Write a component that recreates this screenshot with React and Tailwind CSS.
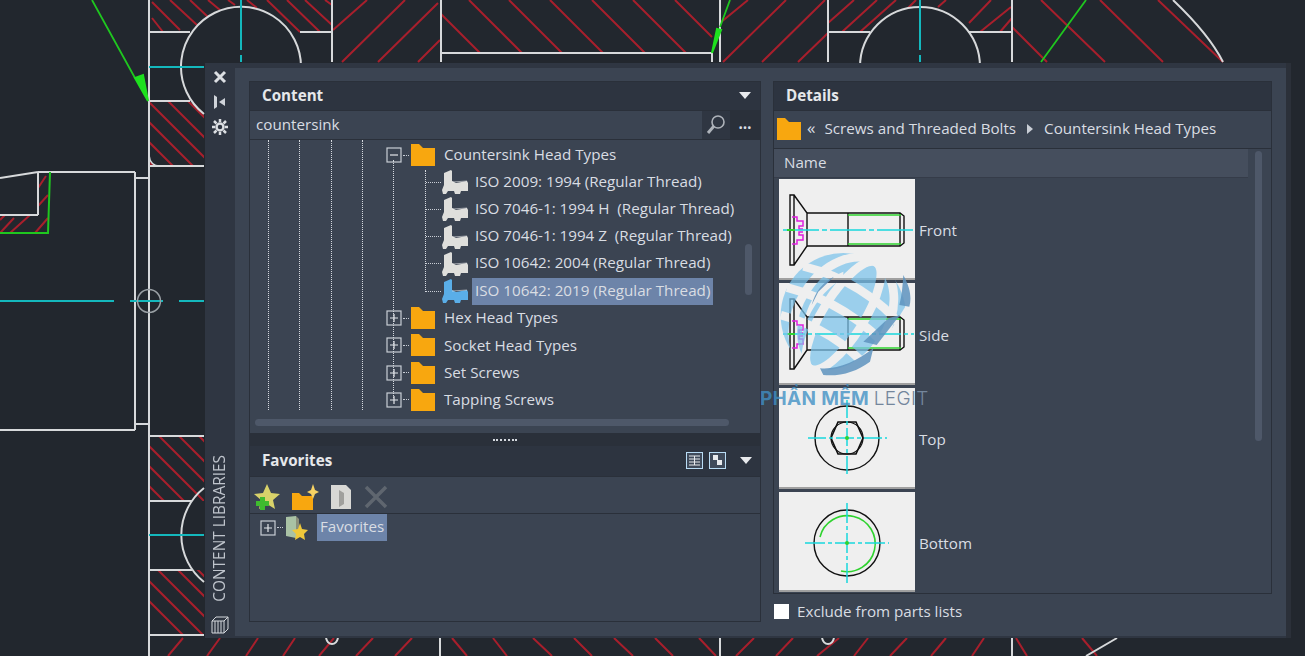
const font = "font-['Open_Sans','Noto_Sans',sans-serif]";

const hatchOffsets = [];
for (let i = -40; i <= 100; i += 20) hatchOffsets.push(i);

const Canvas = () => (
  <svg className="absolute inset-0" width="1305" height="656" viewBox="0 0 1305 656" fill="none">
    <defs>
      <clipPath id="blockA"><path d="M149 101H204V166H149Z" /></clipPath>
      <clipPath id="blockB"><path d="M149 436H204V501H149Z" /></clipPath>
      <clipPath id="blockC"><path d="M149 570H204V635H149Z" /></clipPath>
    </defs>
    <g stroke="#a81f2c" strokeWidth="2">
      <g clipPath="url(#blockA)">
        {hatchOffsets.map((r) => <line key={r} x1={r + 7} y1="0" x2={r + 207} y2="200" />)}
      </g>
      <g clipPath="url(#blockB)">
        {hatchOffsets.map((r) => <line key={r} x1={r + 103} y1="400" x2={r + 303} y2="600" />)}
      </g>
      <g clipPath="url(#blockC)">
        {hatchOffsets.map((r) => <line key={r} x1={r + 108} y1="520" x2={r + 308} y2="720" />)}
      </g>
      <path d="M152 18L163 32M152 2L180 30M170 0L197 25M190 0L208 17M208 0L220 10M228 0L235 5M247 0L257 8M267 0L300 32M287 0L320 32M305 0L332 25M325 0L332 5" />
      <path d="M333 30L367 0M342 62L405 0M378 62L438 3M418 62L440 40" />
      <path d="M441 14L480 53M469 0L522 53M509 0L562 53M550 0L603 53M592 0L645 53M633 0L686 53M675 0L712 37" />
      <path d="M720 23L748 0M723 62L786 0M762 62L825 0M798 62L828 33" />
      <path d="M828 23L854 0M842 32L877 0M860 32L896 0M908 8L916 0M938 7L946 0M969 23L991 0M980 32L1011 7M1000 32L1012 18" />
      <path d="M1012 27L1047 62M1041 0L1105 62M1100 0L1163 62M1158 0L1223 62" />
      <path d="M46 176L38 188M48 195L38 206M0 233L14 218M10 233L30 215M35 233L48 218M0 220L5 215" />
      <path d="M168 656L183 638M207 656L220 638M246 656L258 638M283 656L295 638M319 656L334 638M356 656L373 638M395 656L412 638" />
      <path d="M452 638L467 656M493 638L507 656M533 638L552 656M574 638L592 656M614 638L633 656M655 638L673 656M699 638L716 656" />
      <path d="M736 656L754 638M776 656L793 638M817 656L839 638M854 656L868 638M890 656L907 638M931 656L946 638M972 656L984 638M1016 638L1027 656M1082 638L1097 656" />
    </g>
    <g stroke="#d7d9db" strokeWidth="2">
      <path d="M149 0V656" />
      <path d="M149 32H190M149 101H190M149 166H204" />
      <path d="M204 114A60 60 0 1 1 301 67" />
      <path d="M300 32H332M332 0V62" />
      <path d="M149 155Q150 166 160 166" strokeWidth="1.5" />
      <path d="M135 172V430M0 430H135M135 178H149M135 424H149M38 172H135M0 178L38 172M38 172V215M0 215H38" />
      <path d="M149 436H204M149 501H192M149 570H192M149 635H204" />
      <path d="M204 488A60 60 0 0 0 204 582" />
      <path d="M441 0V62M441 53H712M712 53V62M720 0V62M828 0V62M1012 0V62M828 32H870M968 32H1012" />
      <path d="M860 67A60 60 0 0 1 980 67" />
      <path d="M1173 0C1194 20 1214 44 1223 62" />
      <path d="M440 638V656M720 638V656M1012 638V656M1086 656L1117 638" />
      <path d="M326 638C328 646 336 646 338 638M822 638C824 646 832 646 834 638" />
    </g>
    <g stroke="#14b8bd" strokeWidth="2">
      <path d="M149 67H204M241 0V50M241 55V62M149 535H204M920 0V50M920 55V62" />
      <path d="M0 301H114M130 301H163M179 301H204" />
    </g>
    <circle cx="149" cy="301" r="11.5" stroke="#9aa0a5" strokeWidth="1.5" />
    <path d="M92 0L135 78M1086 0L1041 62M730 0L720 27" stroke="#1fc71f" strokeWidth="1.8" />
    <path d="M135 78L148 101L143 75Z" fill="#1ee01e" stroke="#1ee01e" strokeWidth="2" />
    <path d="M712 53L717 29L721 30Z" fill="#1ee01e" stroke="#1ee01e" strokeWidth="2" />
    <path d="M50 172L48 233H0" stroke="#1fc71f" strokeWidth="2" />
  </svg>
);

const Folder = ({ className = "" }) => (
  <svg className={className} width="26" height="24" viewBox="0 0 26 24">
    <path d="M1 1H9L13 5H25V23H1Z" fill="#f8a70f" />
  </svg>
);

const Part = ({ color = "#dfdfdc" }) => (
  <svg width="28" height="24" viewBox="0 0 28 24">
    <path d="M3 3L10 0L11 1V11L15 13L26 11L27 13V21H20L19 24H14L13 21H7L5 24H2L1 20L3 15Z" fill={color} />
    <path d="M11 12L26 11" stroke="#fff" strokeWidth="1" opacity="0.5" />
  </svg>
);

const Expander = ({ open }) => (
  <svg width="16" height="16" viewBox="0 0 16 16" className="shrink-0">
    <rect x="1" y="1" width="14" height="14" fill="none" stroke="#c9ced6" strokeWidth="1.2" />
    <path d={open ? "M4 8H12" : "M4 8H12M8 4V12"} stroke="#e4e7ec" strokeWidth="1.2" />
  </svg>
);

const folderRows = ["Hex Head Types", "Socket Head Types", "Set Screws", "Tapping Screws"];
const partRows = [
  "ISO 2009: 1994 (Regular Thread)",
  "ISO 7046-1: 1994 H  (Regular Thread)",
  "ISO 7046-1: 1994 Z  (Regular Thread)",
  "ISO 10642: 2004 (Regular Thread)",
];

const FolderRow = ({ label, open }) => (
  <div className="flex h-[27.2px] items-center pl-[136px]">
    <Expander open={open} />
    <span className="w-[6px] border-t border-dotted border-[#c9ced6] mx-[1px]" />
    <Folder />
    <span className="ml-[8px] pb-[1px] whitespace-pre">{label}</span>
  </div>
);

const PartRow = ({ label, selected }) => (
  <div className="flex h-[27.2px] items-center pl-[176px]">
    <span className="w-[15px] border-t border-dotted border-[#c9ced6]" />
    <Part color={selected ? "#5aaee8" : "#dfdfdc"} />
    <span className={`ml-[3px] px-[3px] h-[27px] leading-[25px] whitespace-pre ${selected ? "bg-[#6d84a9]" : ""}`}>{label}</span>
  </div>
);

const Guide = ({ className }) => (
  <span className={`absolute w-0 border-l border-dotted border-[#d5d9df] ${className}`} />
);

const Caret = () => (
  <svg width="12" height="7" viewBox="0 0 12 7"><path d="M0 0H12L6 7Z" fill="#e8eaed" /></svg>
);

const Front = ({ sideways }) => (
  <svg width="136" height="101" viewBox="0 0 136 101" fill="none">
    <path d="M11 16V86H15V16ZM15 16L28 34V67L15 86" stroke="#111" strokeWidth="1.4" />
    <path d="M28 34H69M28 67H69M69 34V67M69 34H121L125 37V64L121 67H69M121 34V67" stroke="#111" strokeWidth="1.4" />
    <path d="M69 36H122M69 65H122" stroke="#2fd32f" strokeWidth="1.6" />
    <path d="M13 38H18V42H24V47H20V50H24M24 53H20V56H24V61H18V65H13" stroke="#e01fe0" strokeWidth="1.5" />
    <path d="M4 51H135" stroke="#19d7dd" strokeWidth="1.5" strokeDasharray={sideways ? "22 3 4 3" : "36 3 5 3"} />
    <path d="M8 51H16" stroke="#2fd32f" strokeWidth="2" />
  </svg>
);

const Top = () => (
  <svg width="136" height="101" viewBox="0 0 136 101" fill="none">
    <circle cx="68" cy="50" r="32" stroke="#111" strokeWidth="1.4" />
    <path d="M59 34H77L84 50L77 66H59L52 50Z" stroke="#111" strokeWidth="1.6" />
    <circle cx="68" cy="50" r="16" stroke="#111" strokeWidth="1.2" />
    <path d="M29 50H108M68 12V89" stroke="#19d7dd" strokeWidth="1.5" strokeDasharray="18 3 4 3" />
    <circle cx="68" cy="50" r="2" fill="#2fd32f" />
  </svg>
);

const Bottom = () => (
  <svg width="136" height="100" viewBox="0 0 136 100" fill="none">
    <circle cx="68" cy="51" r="33" stroke="#111" strokeWidth="1.4" />
    <path d="M41 45A28 28 0 1 1 62 79" stroke="#2fd32f" strokeWidth="1.6" />
    <path d="M26 51H110M68 11V92" stroke="#19d7dd" strokeWidth="1.5" strokeDasharray="20 3 4 3" />
    <circle cx="68" cy="51" r="2" fill="#2fd32f" />
  </svg>
);

const views = [
  { label: "Front", Pic: Front, h: "h-[101px]" },
  { label: "Side", Pic: () => <Front sideways />, h: "h-[102px]" },
  { label: "Top", Pic: Top, h: "h-[101px]" },
  { label: "Bottom", Pic: Bottom, h: "h-[100px]" },
];

const Watermark = () => (
  <div className="absolute left-[525px] top-[182px] flex flex-col pointer-events-none">
    <svg width="140" height="130" viewBox="45 525 420 390" className="ml-[15px]">
      <defs>
        <mask id="globeMask">
          <circle cx="250" cy="722" r="188" fill="#fff" />
          <g transform="rotate(32 250 722)" stroke="#000" strokeWidth="26" fill="none">
            <ellipse cx="250" cy="722" rx="62" ry="188" />
            <ellipse cx="250" cy="722" rx="135" ry="188" />
            <path d="M70 660Q250 600 430 660M62 740Q250 680 438 740M90 820Q250 770 410 820" />
          </g>
          <path d="M470 640L300 915H480Z" fill="#000" />
          <path d="M130 900C200 900 300 870 370 800L440 700L470 800L330 920H130Z" fill="#000" />
          <path d="M250 590C180 620 130 690 125 790C140 720 180 650 250 610Z" fill="#000" />
        </mask>
      </defs>
      <rect x="45" y="525" width="420" height="390" fill="#7cc4ec" opacity="0.72" mask="url(#globeMask)" />
      <g fill="#5f94bf" opacity="0.85">
        <path d="M430 600C452 640 455 670 448 695L418 690C426 660 428 630 430 600Z" />
        <path d="M420 720L350 810L310 800L385 730Z" />
        <path d="M180 880C230 885 290 860 340 820L330 860C290 890 240 905 190 900Z" />
        <path d="M222 605C190 620 165 650 155 690L175 650Z" />
      </g>
    </svg>
    <div className="mt-[7px] whitespace-nowrap text-[19px] leading-[24px] font-['Inter',sans-serif] tracking-[0.3px]">
      <span className="font-bold text-[#3f8fc4]/80">PHẦN MỀM </span>
      <span className="font-light text-[#74869c]">LEGIT</span>
    </div>
  </div>
);

export default function App() {
  return (
    <div className={`relative w-[1305px] h-[656px] overflow-hidden bg-[#22272e] text-[15.2px] text-[#d9dde3] ${font}`}>
      <Canvas />

      <div className="absolute left-[205px] top-[63px] w-[1086px] h-[575px] flex bg-[#2f3642] border-r-[5px] border-[#2b3039]">
        {/* title strip */}
        <div className="w-[30px] shrink-0 flex flex-col items-center pt-[7px] pb-[3px]">
          <svg width="16" height="14" viewBox="0 0 16 14" className="mb-[11px]"><path d="M3 2L13 12M13 2L3 12" stroke="#dcdfe3" strokeWidth="3" /></svg>
          <svg width="16" height="14" viewBox="0 0 16 14" className="mb-[10px]"><path d="M2 0L5 2V12L2 14ZM7 7L13 3V11Z" fill="#cfd3d9" /></svg>
          <svg width="16" height="16" viewBox="0 0 16 16" fill="none" stroke="#dcdfe3">
            <circle cx="8" cy="8" r="3.500" strokeWidth="2.500" />
            <path d="M8 0V3M8 13V16M0 8H3M13 8H16M2 2L4.500 4.500M14 2L11.500 4.500M2 14L4.500 11.500M14 14L11.500 11.500" strokeWidth="2.500" />
          </svg>
          <div className="mt-auto mb-[13px] text-[15.4px] leading-[18px] text-[#bfc4cc] [writing-mode:vertical-rl] rotate-180 whitespace-nowrap">CONTENT LIBRARIES</div>
          <svg width="20" height="20" viewBox="0 0 20 20" fill="none" stroke="#d5d8dd" strokeWidth="1"><path d="M2 6H14V18H2ZM2 6L6 2H18V14L14 18M14 6L18 2M5 6V18M8 6V18M11 6V18" /></svg>
        </div>

        <div className="relative flex-1 bg-[#3b4452] mt-[5px] mb-[2px] flex pt-[13px] pl-[14px] pr-[14px] gap-[12px]">
          {/* left column */}
          <div className="w-[512px] h-[541px] shrink-0 flex flex-col border border-[#2a303a]">
            <div className="h-[28px] shrink-0 flex items-center justify-between bg-[#2d3440] pl-[12px] pr-[9px] pb-[1px] font-bold text-[#e6e8eb]">
              <span>Content</span>
              <Caret />
            </div>
            <div className="h-[30px] shrink-0 flex border-b border-[#2a303a] border-t">
              <span className="flex-1 pl-[6px] leading-[26px]">countersink</span>
              <div className="w-[28px] bg-[#2f3642] flex items-center justify-center">
                <svg width="20" height="20" viewBox="0 0 20 20" fill="none" stroke="#aeb3ba" strokeWidth="1.6"><circle cx="12" cy="7" r="6" /><path d="M8 11L2 18" strokeWidth="3" /></svg>
              </div>
              <div className="w-[30px] flex items-center justify-center bg-[#2a303a] font-bold pb-[2px] leading-none text-[#d9dde3]">…</div>
            </div>
            <div className="relative h-[293px] shrink-0 overflow-hidden pt-[1.5px]">
              <Guide className="left-[18px] top-0 h-[270px]" />
              <Guide className="left-[49px] top-0 h-[270px]" />
              <Guide className="left-[81px] top-0 h-[270px]" />
              <Guide className="left-[112px] top-0 h-[270px]" />
              <Guide className="left-[143px] top-[20px] h-[238px]" />
              <Guide className="left-[175px] top-[30px] h-[122px]" />
              <FolderRow label="Countersink Head Types" open />
              {partRows.map((row) => <PartRow key={row} label={row} />)}
              <PartRow label="ISO 10642: 2019 (Regular Thread)" selected />
              {folderRows.map((row) => <FolderRow key={row} label={row} />)}
              <div className="absolute left-[5px] bottom-[7px] w-[474px] h-[7px] rounded-full bg-[#4e5869]" />
              <div className="absolute right-[8px] top-[104px] w-[7px] h-[51px] rounded-full bg-[#4e5869]" />
            </div>
            <div className="h-[13px] shrink-0 bg-[#2a303a] flex items-center justify-center">
              <span className="w-[24px] border-t-2 border-dotted border-[#d5d9df]" />
            </div>
            <div className="h-[30px] shrink-0 flex items-center bg-[#2d3440] pl-[12px] pr-[8px] pb-[1px] font-bold text-[#e6e8eb]">
              <span className="flex-1">Favorites</span>
              <svg width="17" height="17" viewBox="0 0 17 17" className="mr-[6px]"><rect x=".5" y=".5" width="16" height="16" fill="#3f4a5a" stroke="#b9dcf5" /><path d="M3 4H14M3 7H14M3 10H14M3 13H14M8.500 4V13" stroke="#e8eaed" /></svg>
              <svg width="17" height="17" viewBox="0 0 17 17" className="mr-[14px]"><rect x=".5" y=".5" width="16" height="16" fill="#3f4a5a" stroke="#b9dcf5" /><path d="M4 3H9V8H4ZM8 8H13V13H8Z" fill="#e8eaed" /></svg>
              <Caret />
            </div>
            <div className="h-[38px] shrink-0 flex items-center pl-[1px] pt-[3px] gap-[10px] border-y border-[#2a303a]">
              <svg width="30" height="30" viewBox="0 0 30 30">
                <path d="M16 2L20 11L29 12L22 18L24 27L16 22L8 27L10 18L3 12L12 11Z" fill="#d8d26a" />
                <path d="M9 15H14V19H18V24H14V28H9V24H5V19H9Z" fill="#3fbb2e" />
              </svg>
              <svg width="28" height="28" viewBox="0 0 28 28">
                <path d="M1 10H8L11 13H22V27H1Z" fill="#f8a70f" />
                <path d="M22 1L24 7L28 9L24 11L22 16L20 11L16 9L20 7Z" fill="#f7d264" />
              </svg>
              <svg width="24" height="28" viewBox="0 0 24 28">
                <path d="M2 2H17L22 7V26H2Z" fill="#d8d8d5" />
                <path d="M10 7L15 10V21L10 24Z" fill="#a0a09d" />
              </svg>
              <svg width="26" height="26" viewBox="0 0 26 26"><path d="M3 3L23 23M23 3L3 23" stroke="#5f666f" strokeWidth="3.5" /></svg>
            </div>
            <div className="flex-1 flex items-start pl-[10px]">
              <div className="flex items-center h-[27px]">
                <Expander />
                <span className="w-[6px] mx-[1px] border-t border-dotted border-[#c9ced6]" />
                <svg width="26" height="26" viewBox="0 0 26 26">
                  <path d="M2 2L12 1V23L2 21Z" fill="#a9c2a5" />
                  <path d="M12 1L15 4V22H12Z" fill="#8a8f7a" />
                  <path d="M16 8L18 14L24 15L20 19L21 25L16 22L11 25L12 19L8 15L14 14Z" fill="#efc83a" />
                </svg>
                <span className="ml-[7px] px-[3px] h-[27px] leading-[25px] bg-[#6d84a9]">Favorites</span>
              </div>
            </div>
          </div>

          {/* right column */}
          <div className="w-[499px] shrink-0 flex flex-col">
            <div className="h-[513px] flex flex-col border border-[#2a303a]">
              <div className="h-[28px] shrink-0 flex items-center bg-[#2d3440] pl-[12px] pb-[1px] font-bold text-[#e6e8eb]">Details</div>
              <div className="h-[39px] shrink-0 flex items-center border-y border-[#2a303a] pl-[2px] pb-[2px] whitespace-pre">
                <Folder />
                <span className="ml-[5px] mr-[9px] leading-none text-[17px] pb-[3px]">«</span>
                <span>Screws and Threaded Bolts</span>
                <svg width="6" height="10" viewBox="0 0 6 10" className="mx-[11px]"><path d="M0 0L6 5L0 10Z" fill="#c9ced6" /></svg>
                <span>Countersink Head Types</span>
              </div>
              <div className="relative flex-1 min-h-0">
                <div className="h-[29px] mr-[23px] bg-[#454e5d] pl-[10px] leading-[27px] border-b border-[#353c49]">Name</div>
                <div className="absolute right-[9px] top-[2px] w-[7px] h-[290px] rounded-full bg-[#4e5869]" />
                <div className="pl-[5px] pt-[1px] flex flex-col gap-[3px]">
                  {views.map(({ label, Pic, h }) => (
                    <div key={label} className="flex items-center">
                      <div className={`w-[136px] ${h} bg-[#efefef] border-b-2 border-[#a0a0a0] overflow-hidden`}><Pic /></div>
                      <span className="ml-[4px] pt-[2px]">{label}</span>
                    </div>
                  ))}
                </div>
              </div>
            </div>
            <label className="flex items-center h-[15px] mt-[10px] pl-[1px]">
              <span className="w-[15px] h-[15px] bg-white" />
              <span className="ml-[8px]">Exclude from parts lists</span>
            </label>
          </div>

          <Watermark />
        </div>
      </div>
    </div>
  );
}
